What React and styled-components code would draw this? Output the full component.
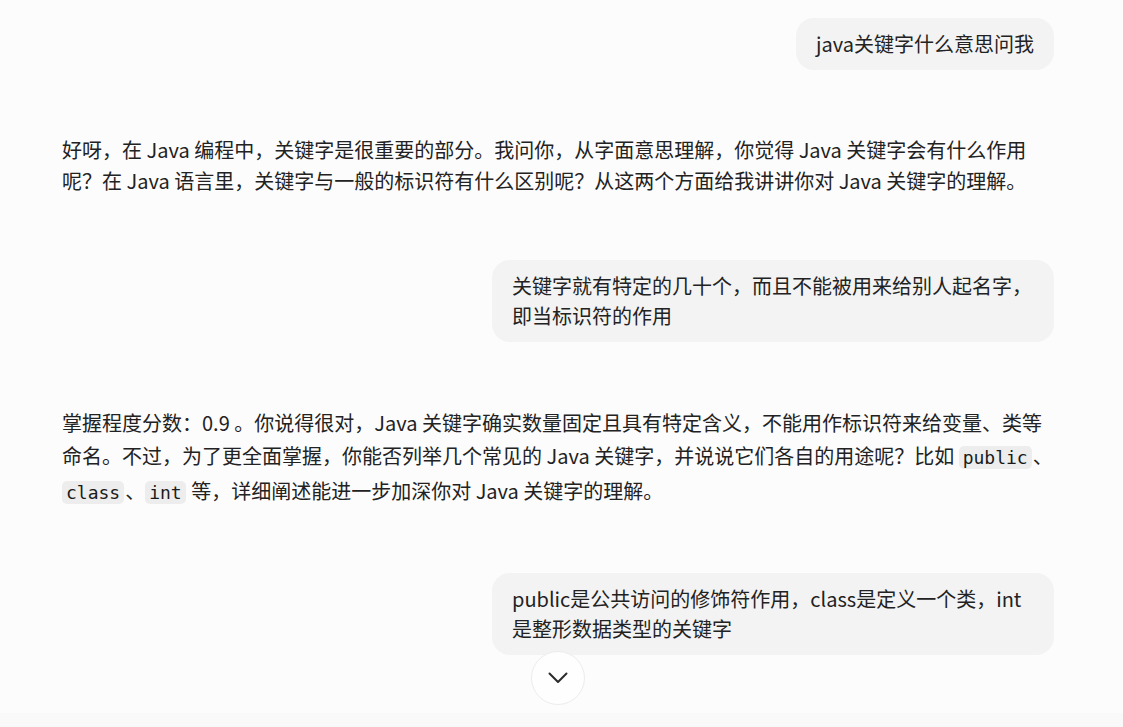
import styled, { createGlobalStyle } from "styled-components";

const GlobalStyle = createGlobalStyle`
  html, body {
    margin: 0;
    padding: 0;
    background: #fcfcfc;
  }
  * {
    box-sizing: border-box;
  }
`;

const Page = styled.div`
  position: relative;
  width: 1123px;
  height: 727px;
  overflow: hidden;
  display: flex;
  flex-direction: column;
  font-family: "Noto Sans CJK SC", "Noto Sans", sans-serif;
  color: #222;
`;

const Thread = styled.div`
  flex: 1;
  width: 992px;
  margin-left: 62px;
  padding-top: 18px;
  display: flex;
  flex-direction: column;
  gap: 64px;
`;

const UserRow = styled.div`
  display: flex;
  justify-content: flex-end;
`;

const Bubble = styled.div`
  max-width: 562px;
  padding: 11px 20px;
  background: #f3f3f3;
  border-radius: 18px;
  font-size: 20px;
  line-height: 30px;
`;

const Answer = styled.p`
  margin: 0;
  font-size: 20px;
  line-height: ${(p) => p.$lineHeight || "31px"};
  width: ${(p) => p.$width || "992px"};
`;

const Code = styled.code`
  font-family: "DejaVu Sans Mono", "Liberation Mono", monospace;
  font-size: 18px;
  color: #1a1a1a;
  background: #ededed;
  border-radius: 5px;
  padding: 1px 4px;
  margin-right: 1px;
`;

const BottomBar = styled.div`
  height: 14px;
  background: #f9f9f9;
`;

const ScrollButton = styled.button`
  position: absolute;
  left: 531px;
  top: 651px;
  width: 54px;
  height: 54px;
  border-radius: 50%;
  border: 1px solid #ececec;
  background: #fefefe;
  display: flex;
  align-items: center;
  justify-content: center;
  padding: 0;
  cursor: pointer;
`;

const ChevronDown = () => (
  <svg width="20" height="12" viewBox="0 0 20 12" fill="none">
    <polyline
      points="1.5,1.5 10,10 18.5,1.5"
      stroke="#2b2b2b"
      strokeWidth="2"
      strokeLinecap="round"
      strokeLinejoin="round"
    />
  </svg>
);

export default function App() {
  return (
    <Page>
      <GlobalStyle />
      <Thread>
        <UserRow>
          <Bubble>java关键字什么意思问我</Bubble>
        </UserRow>
        <Answer>
          好呀，在 Java 编程中，关键字是很重要的部分。我问你，从字面意思理解，你觉得 Java
          关键字会有什么作用呢？在 Java 语言里，关键字与一般的标识符有什么区别呢？从这两个方面给我讲讲你对
          Java 关键字的理解。
        </Answer>
        <UserRow>
          <Bubble>关键字就有特定的几十个，而且不能被用来给别人起名字，即当标识符的作用</Bubble>
        </UserRow>
        <Answer $width="998px" $lineHeight="33px">
          掌握程度分数：0.9 。你说得很对，Java 关键字确实数量固定且具有特定含义，不能用作标识符来给变量、类等命名。不过，为了更全面掌握，你能否列举几个常见的
          Java 关键字，并说说它们各自的用途呢？比如 <Code>public</Code>、<Code>class</Code>、
          <Code>int</Code> 等，详细阐述能进一步加深你对 Java 关键字的理解。
        </Answer>
        <UserRow>
          <Bubble>public是公共访问的修饰符作用，class是定义一个类，int是整形数据类型的关键字</Bubble>
        </UserRow>
      </Thread>
      <BottomBar />
      <ScrollButton aria-label="滚动到底部">
        <ChevronDown />
      </ScrollButton>
    </Page>
  );
}
